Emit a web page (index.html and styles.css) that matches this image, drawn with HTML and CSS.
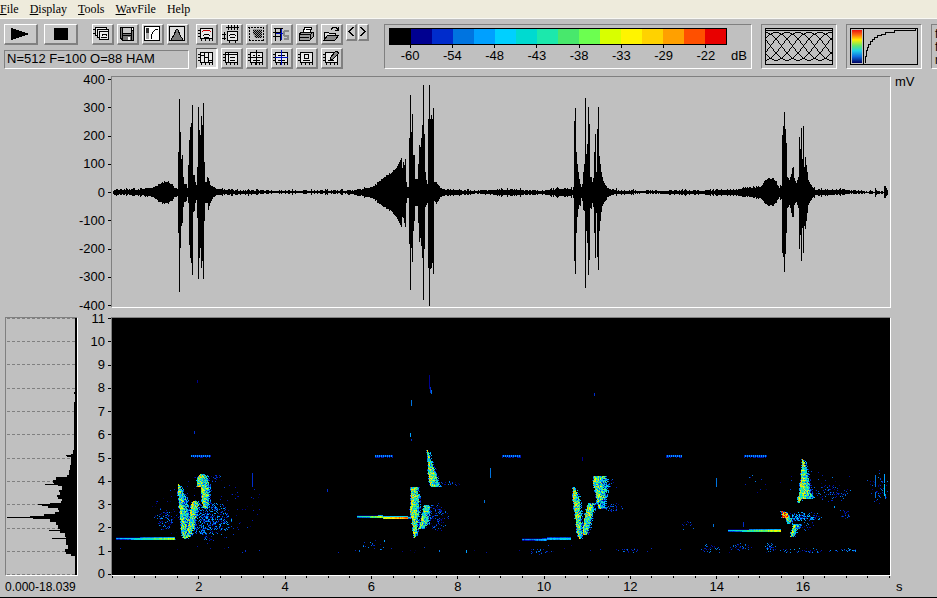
FILE: index.html
```html
<!DOCTYPE html>
<html lang="en">
<head>
<meta charset="utf-8">
<title>Sound analysis</title>
<link rel="stylesheet" href="styles.css">
</head>
<body>
<svg class="defs" aria-hidden="true">
  <symbol id="frame" viewBox="0 0 18 18">
    <rect x="3.500" y="3.500" width="12" height="10" fill="#e8e8e8" stroke="#000"/>
    <path d="M1 5.500h2M1 8.500h2M1 11.500h2M4.500 14v2M8.500 14v2M12.500 14v2M15.500 14v2" stroke="#000" fill="none"/>
  </symbol>
</svg>

<nav class="menubar">
  <button><u>F</u>ile</button>
  <button><u>D</u>isplay</button>
  <button><u>T</u>ools</button>
  <button><u>W</u>avFile</button>
  <button>Help</button>
</nav>

<header class="toolbar">
  <div class="transport">
    <div class="row">
      <button class="btn wide" aria-label="Play"><svg viewBox="0 0 30 17"><path d="M6 3L24 9L6 15z"/></svg></button>
      <button class="btn wide" aria-label="Stop"><svg viewBox="0 0 30 17"><path d="M9 3h14v12H9z"/></svg></button>
      <div class="icons">
        <button class="btn" aria-label="Copy"><svg viewBox="0 0 18 18"><g fill="#e8e8e8" stroke="#000"><path d="M2.500 2.500h11v8h-11z"/><path d="M4.500 4.500h11v8h-11z"/><path d="M6.500 6.500h9v8h-9z"/></g><path d="M0 4.500h2M0 8.500h2M8 12.500h6M9 10.500l1-1h3l1 1" stroke="#000" fill="none"/></svg></button>
        <button class="btn" aria-label="Save"><svg viewBox="0 0 18 18"><path d="M2 2h14v14H4l-2-2z"/><path d="M5 3h8v5H5z" fill="#c8c8c8"/><path d="M3 3h1v10H3zM14 6h1v9h-1zM5 9h8v1H5z" fill="#777"/><path d="M5 11h8v4H5z" fill="#777"/><path d="M10 12h2v3h-2z" fill="#fff"/><path d="M14 3h1v2h-1z" fill="#fff"/></svg></button>
        <button class="btn" aria-label="Palette curve"><svg viewBox="0 0 18 18"><path d="M1.500 1.500h15v14h-15z" fill="#fff" stroke="#000"/><path d="M3 3h3v5H3z" fill="#333"/><path d="M3 8h3v6H3z" fill="#aaa"/><path d="M8.500 14V9.500L10.500 6.500L12.500 4.500H15" fill="none" stroke="#000"/></svg></button>
        <button class="btn" aria-label="Spectrum"><svg viewBox="0 0 18 18"><path d="M1.500 1.500h15v14h-15z" fill="#ddd" stroke="#000"/><path d="M3 15L6 10L8 5L9 4L10 5L12 10L15 15z" fill="#777" stroke="#000"/></svg></button>
      </div>
    </div>
    <output class="status">N=512 F=100 O=88 HAM</output>
  </div>

  <div class="views">
    <button class="btn" aria-label="Spectrogram"><svg viewBox="0 0 18 18"><use href="#frame"/><path d="M6 5.500h7M5 6.500h1M13 6.500h1" stroke="#c00"/><path d="M7 9.500h5M6 10.500h1M12 10.500h1M7 12.500h5" stroke="#000" fill="none"/></svg></button>
    <button class="btn" aria-label="Time axis"><svg viewBox="0 0 18 18"><path d="M5.500 6.500h10v9h-10z" fill="#e8e8e8" stroke="#000"/><path d="M4 2.500h13M6.500 0v5M9.500 0v5M12.500 0v5M15.500 0v5M0 9.500h4M2.500 7v8M0 13.500h4M8 9.500h5M7 10.500h1M13 10.500h1M8 12.500h5M7.500 16v2M13.500 16v2" stroke="#000" fill="none"/></svg></button>
    <button class="btn" aria-label="Select area"><svg viewBox="0 0 18 18"><path d="M1 2.500h15M2.500 2v14M2 15.500h15M16.500 2v14" stroke="#000" stroke-dasharray="2 1" fill="none"/><path d="M6 4h9v9H8L6 9z" fill="#999"/><path d="M6 5.500h9M6 7.500h9M8 9.500h7M8 11.500h7" stroke="#000" stroke-dasharray="1 1"/><path d="M7 6.500h8M7 8.500h8M9 10.500h6M9 12.500h6" stroke="#000" stroke-dasharray="1 1"/></svg></button>
    <button class="btn" aria-label="Settings"><svg viewBox="0 0 18 18"><path d="M2 3.500h9M3.500 3v13M1 7.500h7M1 11.500h7M8.500 3v13" stroke="#000" fill="none"/><path d="M4 8.500h7M9.500 4v11" stroke="#0010c0" fill="none"/><path d="M17 6h-4l-1 1v3l1 1h3v3h-4" stroke="#888" stroke-width="2" fill="none"/></svg></button>
    <button class="btn" aria-label="Print"><svg viewBox="0 0 18 18"><path d="M6 7l2-5h7l-2 5z" fill="#fff" stroke="#000"/><path d="M2 9l3-2h11v5l-3 3H2z" fill="#999" stroke="#000"/><path d="M2 9.500h11v5M13 9.500l3-2M3 12.500h9M5 15.500h8M9 4.500h4" stroke="#000" fill="none"/></svg></button>
    <button class="btn" aria-label="Open"><svg viewBox="0 0 18 18"><path d="M2 15V7h4l1 1h6v3" fill="#ddd" stroke="#000"/><path d="M2 15l4-5h11l-4 5z" fill="#888" stroke="#000"/><path d="M9 4.500l2-2h3l2 2M16.500 2v4M13 5.500h3" stroke="#000" fill="none"/></svg></button>

    <button class="btn pressed" aria-label="Columns"><svg viewBox="0 0 18 18"><use href="#frame"/><path d="M7.500 3v11M11.500 3v11M4 6.500h3M8 8.500h3M12 11.500h3" stroke="#000"/></svg></button>
    <button class="btn" aria-label="Rows"><svg viewBox="0 0 18 18"><use href="#frame"/><path d="M4 5.500h12M6.500 3v11M8 8.500h5M8 11.500h5" stroke="#000"/></svg></button>
    <button class="btn" aria-label="Cross cursor"><svg viewBox="0 0 18 18"><use href="#frame"/><path d="M9.500 1v15M3 8.500h13M6 6.500h2M11 6.500h2M6 11.500h7" stroke="#000"/></svg></button>
    <button class="btn" aria-label="Blue cursor"><svg viewBox="0 0 18 18"><use href="#frame"/><path d="M6 6.500h7M6 11.500h7" stroke="#000"/><path d="M9.500 1v15M3 8.500h13" stroke="#0010c0"/></svg></button>
    <button class="btn" aria-label="Zoom box"><svg viewBox="0 0 18 18"><use href="#frame"/><path d="M7.500 5.500h4v4h-4zM6 11.500h7" stroke="#000" fill="none"/></svg></button>
    <button class="btn" aria-label="Annotate"><svg viewBox="0 0 18 18"><use href="#frame"/><path d="M8 9l6-7 3 2-6 6-3 1z" fill="#888" stroke="#000"/><path d="M6 11.500h6" stroke="#000"/></svg></button>
  </div>

  <div class="arrows">
    <button class="btn arrow" aria-label="Previous"><svg viewBox="0 0 8 14"><path d="M6 2L2 6.500L6 11" fill="none" stroke="#000" stroke-width="1.500"/></svg></button>
    <button class="btn arrow" aria-label="Next"><svg viewBox="0 0 8 14"><path d="M2 2L6 6.500L2 11" fill="none" stroke="#000" stroke-width="1.500"/></svg></button>
  </div>

  <div class="panel scale">
    <div class="scale-main">
      <div class="colors" id="colors"></div>
      <div class="levels"><span>-60</span><span>-54</span><span>-48</span><span>-43</span><span>-38</span><span>-33</span><span>-29</span><span>-22</span></div>
    </div>
    <span class="unit">dB</span>
  </div>
  <div class="panel thumb">
    <svg viewBox="0 0 68 37"><path d="M.5.5h67v36H.5zM0 2.500h68" fill="none" stroke="#000"/><path id="windows" fill="none" stroke="#000"/></svg>
  </div>
  <div class="panel thumb">
    <svg viewBox="0 0 68 37">
      <defs><linearGradient id="rainbow" x1="0" y1="0" x2="0" y2="1"><stop offset="0" stop-color="#e81010"/><stop offset=".15" stop-color="#ff7010"/><stop offset=".3" stop-color="#fff000"/><stop offset=".48" stop-color="#60e870"/><stop offset=".63" stop-color="#20d0e8"/><stop offset=".8" stop-color="#1070e0"/><stop offset="1" stop-color="#000060"/></linearGradient></defs>
      <path d="M.5.5h67v36H.5zM13.500 0v37" fill="none" stroke="#000"/>
      <rect x="2" y="2" width="10" height="33" fill="url(#rainbow)"/>
      <path d="M15.500 35v-7h1v-6h1v-3h1v-3h2v-3h2v-2h2v-2h3v-2h4v-1h4v-2h9v-2h21v-1" fill="none" stroke="#000"/>
    </svg>
  </div>
  <div class="panel more"><span>f</span><span>f</span><span>r</span></div>
</header>

<main class="plots">
  <div class="axis-y wave-axis"><span>400</span><span>300</span><span>200</span><span>100</span><span>0</span><span>-100</span><span>-200</span><span>-300</span><span>-400</span></div>
  <section class="frame wave" aria-label="Waveform">
    <svg viewBox="0 0 778 230" preserveAspectRatio="none"><path id="wave"/></svg>
  </section>
  <span class="mv">mV</span>

  <section class="frame spectrum" aria-label="Spectrum">
    <svg viewBox="0 0 71 256" preserveAspectRatio="none">
      <path id="grid" fill="none" stroke="#808080" stroke-dasharray="3 2"/>
      <path id="spectrum"/>
    </svg>
  </section>
  <span class="range">0.000-18.039</span>

  <div class="axis-y freq-axis"><span>11</span><span>10</span><span>9</span><span>8</span><span>7</span><span>6</span><span>5</span><span>4</span><span>3</span><span>2</span><span>1</span><span>0</span></div>
  <section class="frame sonogram" aria-label="Spectrogram">
    <canvas id="sonogram" width="778" height="256"></canvas>
  </section>
  <div class="axis-x" id="time"></div>
  <span class="sec">s</span>
</main>
<script src="script.js"></script>
</body>
</html>
```

FILE: styles.css
```css
* { box-sizing: border-box; }

body {
  margin: 0;
  height: 100vh;
  display: flex;
  flex-direction: column;
  overflow: hidden;
  background: #c0c0c0;
  color: #000;
  border-bottom: 1px solid #000;
  font: 13px/16px "Liberation Sans", Arial, sans-serif;
}

.defs { display: none; }
svg, canvas { display: block; }
svg { shape-rendering: crispEdges; }

button {
  margin: 0;
  padding: 0;
  border: 0;
  background: none;
  color: inherit;
  font: inherit;
}

.menubar {
  flex: none;
  display: flex;
  gap: 11px;
  height: 19px;
  background: #eeebdc;
  border-bottom: 1px solid #f8f8f4;
  font: 12px/18px "Liberation Serif", "Times New Roman", serif;
}

.toolbar {
  flex: none;
  display: flex;
  align-items: flex-start;
  padding: 5px 0 7px 4px;
  overflow: hidden;
}
.toolbar > * { flex: none; }

.transport { width: 185px; margin-right: 7px; }
.row { display: flex; gap: 6px; }
.icons { display: flex; gap: 3px; margin-left: 8px; }

.btn {
  display: grid;
  place-content: start;
  width: 22px;
  height: 21px;
  overflow: hidden;
  border: 1px solid;
  border-color: #fff #808080 #808080 #fff;
  border-right-width: 2px;
  border-bottom-width: 2px;
  background: #c8c8c8;
}
.btn svg { width: 18px; height: 18px; }
.btn.wide { width: 34px; }
.btn.wide svg { width: 30px; height: 17px; }
.btn.pressed {
  background: #d8d8d8;
  border-color: #606060 #fff #fff #606060;
}
.btn.arrow { width: 11px; height: 17px; }
.btn.arrow svg { width: 8px; height: 14px; }

.status {
  display: block;
  height: 19px;
  margin-top: 5px;
  padding-left: 2px;
  border: 1px solid;
  border-color: #808080 #fff #fff #808080;
}

.views {
  display: grid;
  grid-template-columns: repeat(6, 22px);
  gap: 3px;
  margin-right: 3px;
}
.arrows { display: flex; gap: 1px; margin-right: 15px; }

.panel {
  height: 45px;
  padding: 3px;
  border: 1px solid;
  border-color: #808080 #fff #fff #808080;
  margin-right: 9px;
}
.scale { display: flex; gap: 4px; width: 368px; padding-left: 4px; }
.scale-main { width: 338px; }
.colors { display: flex; height: 17px; border: 1px solid #000; }
.colors i { flex: 1; }
.levels { display: flex; }
.levels span {
  flex: 1;
  display: flex;
  flex-direction: column;
  align-items: center;
}
.levels span::before { content: ""; width: 1px; height: 3px; background: #000; }
.unit { margin-top: 20px; }
.thumb { width: 76px; }
.thumb svg { width: 68px; height: 37px; }
.more { width: 76px; display: flex; flex-direction: column; font-size: 12px; line-height: 13px; }

.plots {
  flex: 1;
  min-height: 0;
  display: grid;
  grid-template-columns: 5px 73px 33px minmax(0, 1fr) 46px;
  grid-template-rows: minmax(0, 232fr) 9px minmax(0, 259fr) 21px;
}

.frame {
  border: 1px solid;
  border-color: #808080 #fff #fff #808080;
  overflow: hidden;
}
.frame svg, .frame canvas { width: 100%; height: 100%; }
.wave { grid-area: 1 / 4; }
.spectrum { grid-area: 3 / 2; }
.sonogram { grid-area: 3 / 4; background: #000; }
.sonogram canvas { image-rendering: pixelated; }

.axis-y {
  display: flex;
  flex-direction: column;
  justify-content: space-between;
}
.axis-y span {
  display: flex;
  justify-content: flex-end;
  align-items: center;
  gap: 3px;
  height: 1px;
}
.axis-y span::after { content: ""; width: 3px; height: 1px; background: #000; }
.wave-axis { grid-area: 1 / 3; padding: 3px 0 2px; }
.freq-axis { grid-area: 3 / 3; padding: 1px 0; }

.axis-x {
  grid-area: 4 / 4;
  display: flex;
  justify-content: space-between;
  padding: 0 1px;
}
.axis-x span {
  display: flex;
  flex-direction: column;
  align-items: center;
  width: 1px;
}
.axis-x span::before { content: ""; width: 1px; flex: none; height: 2px; background: #000; }
.axis-x .major::before { height: 3px; }

.mv { grid-area: 1 / 5; padding: 0 0 0 4px; line-height: 12px; }
.sec { grid-area: 4 / 5; padding: 3px 0 0 5px; }
.range { grid-area: 4 / 2 / auto / 4; padding-top: 3px; font-size: 12px; }
```

FILE: script.js
```js
const palette = [
  [0, 0, 0], [0, 0, 144], [0, 44, 204], [0, 116, 224], [0, 160, 255], [0, 208, 255],
  [0, 218, 208], [28, 232, 172], [72, 232, 108], [108, 255, 80], [216, 255, 0],
  [255, 244, 0], [255, 210, 0], [255, 160, 0], [255, 80, 0], [232, 0, 0]
];

let seed = 20;
function random() {
  seed = (seed * 1664525 + 1013904223) % 4294967296;
  return seed / 4294967296;
}

/* Colour scale */
const colors = document.getElementById('colors');
palette.forEach(c => {
  const cell = document.createElement('i');
  cell.style.background = `rgb(${c})`;
  colors.append(cell);
});

/* Overlapping analysis windows */
let windows = '';
for (let s = -66; s < 68; s += 11) {
  let pen = 'M';
  for (let x = 0; x <= 66; x += 1) {
    const px = s + x;
    if (px < 1 || px > 67) continue;
    windows += `${pen}${px} ${Math.round(32 - 14 * (1 - Math.cos(2 * Math.PI * x / 66)))}`;
    pen = 'L';
  }
}
document.getElementById('windows').setAttribute('d', windows);

/* Time axis, a tick each half second */
const time = document.getElementById('time');
for (let i = 0; i <= 36; i++) {
  const tick = document.createElement('span');
  if (i && i % 4 === 0 && i < 36) {
    tick.className = 'major';
    tick.textContent = i / 2;
  }
  time.append(tick);
}

/* Waveform envelope: column, height above zero, depth below zero */
const envelope = [
  [113,1,1],[125,2,1],[140,2,2],[150,4,3],[155,5,5],[160,8,9],[165,10,10],[170,8,8],[174,4,4],[177,3,3],
  [178,40,40],[179,93,99],[180,60,55],[181,33,33],[182,37,30],[183,15,14],[184,8,9],[186,8,8],[187,4,4],
  [188,27,10],[189,52,52],[190,65,65],[191,69,70],[192,87,82],[193,17,19],[194,17,18],[195,10,10],[196,7,7],
  [197,25,25],[198,85,86],[199,62,65],[200,57,55],[201,76,75],[202,67,68],[203,89,86],[204,30,28],[205,10,10],
  [206,10,10],[207,15,10],[208,14,17],[209,11,13],[210,7,10],[212,5,5],[216,3,2],[225,2,1],[240,1,1],[260,1,0],
  [340,1,0],[355,1,1],[365,3,3],[375,6,6],[380,11,11],[385,15,14],[390,18,17],[395,22,22],[400,32,32],[401,34,34],
  [402,24,24],[403,30,25],[404,27,30],[405,33,34],[406,10,10],[407,5,5],[408,5,5],[409,54,51],[410,97,97],
  [411,60,55],[412,78,69],[413,37,38],[414,37,28],[415,12,12],[417,13,13],[418,28,30],[419,47,49],[420,45,45],
  [421,54,53],[422,67,65],[423,107,107],[424,58,56],[425,20,14],[426,12,12],[427,8,10],[428,73,75],[429,107,113],
  [430,73,76],[431,77,75],[432,73,70],[433,84,81],[434,10,8],[436,9,10],[438,7,8],[440,4,4],[445,2,2],[460,1,1],
  [480,1,0],[500,2,2],[515,2,2],[530,1,1],[545,1,1],[560,3,3],[570,3,3],[572,2,2],[573,5,5],[574,71,68],[575,84,81],
  [576,40,40],[577,28,24],[578,20,16],[579,13,12],[580,8,13],[581,5,5],[582,8,8],[583,20,17],[584,28,18],[585,94,95],
  [586,38,38],[587,48,50],[588,85,82],[589,68,67],[590,15,15],[591,15,16],[592,10,10],[593,14,14],[594,40,40],
  [595,58,65],[596,20,20],[597,63,64],[598,85,77],[599,36,38],[600,28,28],[601,20,19],[602,15,13],[603,10,10],
  [605,6,7],[608,3,3],[612,2,1],[620,1,1],[640,1,0],[700,1,1],[735,2,2],[745,4,3],[755,4,4],[761,5,5],[764,10,9],
  [768,13,12],[772,13,12],[776,9,8],[779,4,4],[781,6,6],[782,57,60],[783,66,64],[784,80,79],[785,63,61],[786,49,40],
  [787,15,15],[789,12,12],[790,15,15],[791,18,20],[792,24,24],[793,25,24],[794,14,12],[796,8,8],[798,15,15],
  [799,55,56],[800,43,42],[801,64,68],[802,33,35],[803,66,60],[804,25,33],[805,35,36],[806,27,28],[807,20,20],
  [808,12,12],[810,8,8],[812,5,5],[815,2,2],[825,2,2],[840,2,1],[850,1,0],[874,0,0],[875,4,4],[876,1,1],[883,0,0],
  [884,6,5],[886,3,2],[888,1,1]
];
let wave = '';
for (let i = 0; i < envelope.length - 1; i++) {
  const [x0, u0, d0] = envelope[i];
  const [x1, u1, d1] = envelope[i + 1];
  for (let x = x0; x < x1; x++) {
    const t = (x - x0) / (x1 - x0);
    const jitter = x1 - x0 > 1 ? random() * random() * 2.4 : 0;
    const up = Math.round(u0 + (u1 - u0) * t + jitter);
    const down = Math.round(d0 + (d1 - d0) * t + jitter);
    wave += `M${x - 112} ${115 - up}h1v${up + down + 1}h-1z`;
  }
}
document.getElementById('wave').setAttribute('d', wave);

/* Mean spectrum: row, leftmost filled column */
const profile = [
  [319,75],[393,74],[395,75],[403,74],[430,74],[450,73],[454,71],[455,66],[456,67],[457,71],[465,70],[470,69],
  [475,67],[477,56],[480,53],[483,54],[484,45],[485,58],[486,62],[490,59],[492,60],[495,57],[497,58],[499,62],
  [501,61],[503,50],[504,38],[505,42],[506,48],[508,58],[510,59],[512,55],[514,44],[516,30],[517,7],[518,33],
  [519,50],[522,56],[525,58],[529,60],[530,49],[531,60],[533,65],[537,66],[538,52],[539,66],[545,68],[549,65],
  [552,66],[554,71],[556,75],[575,75]
];
let spectrum = 'M71 0';
profile.forEach(([y, x]) => { spectrum += `${spectrum.length > 5 ? 'V' : 'V'}${y - 319}H${x - 6}`; });
document.getElementById('spectrum').setAttribute('d', spectrum + 'V256H71z');
let grid = '';
for (let k = 0; k < 12; k++) grid += `M1 ${Math.round(k * 23.18) + 0.5}H69`;
document.getElementById('grid').setAttribute('d', grid);

/* Spectrogram */
const canvas = document.getElementById('sonogram');
const ctx = canvas.getContext('2d');
function dot(x, y, level, h = 1) {
  const v = Math.max(0, Math.min(15, level));
  const a = palette[Math.floor(v)];
  const b = palette[Math.ceil(v)];
  const f = v % 1;
  ctx.fillStyle = `rgb(${a.map((c, i) => Math.round(c + (b[i] - c) * f))})`;
  ctx.fillRect(x - 112, y - 319, 1, h);
}
/* Scattered faint energy over a box */
function haze(x, y, w, h, density, level) {
  for (let j = 0; j < h; j++) for (let i = 0; i < w; i++) {
    const dx = (i - w / 2) / (w / 2);
    const dy = (j - h / 2) / (h / 2);
    const near = Math.max(0, 1 - dx * dx * 0.8 - dy * dy * 0.8);
    if (random() < density * near) dot(x + i, y + j, random() * level + 0.3);
  }
}
/* Call outline given as rows of [y, left, right]; heat is strongest at the left edge */
function call(rows, heat) {
  for (let k = 0; k < rows.length - 1; k++) {
    const [y0, l0, r0] = rows[k];
    const [y1, l1, r1] = rows[k + 1];
    for (let y = y0; y < y1; y++) {
      const t = (y - y0) / (y1 - y0);
      const l = Math.round(l0 + (l1 - l0) * t);
      const r = Math.round(r0 + (r1 - r0) * t);
      for (let x = l - 1; x <= r + 2; x++) {
        const edge = (x - l) / (r - l + 1);
        if (x < l || x > r) {
          if (random() < 0.5) dot(x, y, 1 + random() * 4);
        } else {
          dot(x, y, heat - edge * 4 + (random() - 0.5) * 9);
        }
      }
    }
  }
}
function whistle(x0, x1, y, from, to, drop = 0) {
  for (let x = x0; x <= x1; x++) {
    const t = (x - x0) / (x1 - x0);
    const yy = y + Math.round(drop * t);
    const v = from + (to - from) * t + random() * 2 - 1;
    dot(x, yy - 1, t > 0.4 ? v * 0.4 : 0.6);
    dot(x, yy, v);
    dot(x, yy + 1, t > 0.25 ? v - 1 : v * 0.4);
  }
}

haze(112, 545, 778, 10, 0.012, 2);
haze(150, 470, 110, 78, 0.04, 2);
haze(154, 507, 20, 24, 0.4, 4);
haze(184, 503, 48, 32, 0.55, 4.5);
haze(206, 502, 20, 8, 0.3, 4);
haze(200, 526, 14, 14, 0.3, 4);
haze(205, 474, 20, 8, 0.2, 3);
haze(425, 503, 24, 28, 0.3, 3);
haze(438, 481, 24, 5, 0.35, 3);
haze(600, 502, 24, 10, 0.25, 3);
haze(604, 476, 16, 12, 0.12, 3);
haze(805, 484, 45, 18, 0.16, 3);
haze(784, 512, 38, 9, 0.7, 5);
haze(796, 521, 20, 10, 0.2, 3);
haze(826, 492, 20, 3, 0.6, 4);
haze(838, 509, 14, 10, 0.3, 3);
haze(824, 488, 10, 4, 0.3, 3);
haze(700, 543, 22, 10, 0.3, 3.5);
haze(728, 543, 24, 8, 0.3, 4);
haze(764, 541, 12, 12, 0.4, 4);
haze(778, 548, 55, 5, 0.25, 4);
haze(833, 548, 24, 4, 0.5, 4);
haze(528, 548, 24, 6, 0.3, 3);
haze(618, 547, 22, 6, 0.3, 3);
haze(680, 520, 14, 10, 0.15, 3);
haze(355, 540, 30, 14, 0.12, 4);
haze(700, 470, 180, 30, 0.015, 3);
haze(870, 470, 18, 34, 0.15, 3);

whistle(116, 174, 538, 4, 10);
whistle(357, 408, 516, 6, 15, 1);
whistle(408, 414, 517, 6, 4);
whistle(522, 570, 539, 3, 6, -1);
whistle(728, 780, 530, 5, 11);

[[191,210],[375,392],[502,520],[666,681],[744,766]].forEach(([a, b]) => {
  for (let x = a; x <= b; x++) {
    dot(x, 455, x % 2 ? 4 : 1.6, 2);
    if (random() < 0.5) dot(x, 457, 1.4);
  }
});

call([[484,178,178],[492,178,182],[500,179,186],[515,180,187],[525,181,189],[535,182,189],[539,184,185]], 8);
call([[501,193,196],[504,191,198],[515,190,195],[527,188,193],[537,187,189]], 9);
call([[474,200,204],[478,197,207],[486,197,208],[487,201,208],[499,202,208],[508,203,207]], 9);
call([[450,427,427],[460,428,430],[470,428,434],[480,429,437],[487,431,439]], 9);
call([[487,411,417],[500,411,418],[510,410,418],[520,412,417],[530,413,416],[538,414,414]], 9);
call([[505,424,429],[515,422,429],[524,420,427],[529,418,422]], 8);
call([[487,573,573],[497,573,578],[515,575,580],[530,577,581],[539,579,580]], 9);
call([[503,588,592],[510,586,593],[520,584,590],[530,583,588],[535,583,585]], 9);
call([[476,594,605],[482,593,607],[490,595,606],[500,597,604],[509,599,604]], 8);
call([[503,592,599],[505,593,599]], 7);
call([[459,802,802],[463,802,804],[475,801,807],[487,800,809],[495,799,811],[498,798,812],[499,798,800],[503,798,798]], 9);
call([[511,781,782],[513,782,787],[518,782,788]], 14);
call([[518,786,791],[524,788,790]], 8);
call([[524,793,799],[530,792,796],[537,790,792]], 8);

/* Narrow vertical transients */
[[252,473,14,2],[429,376,14,1],[430,388,6,2],[431,391,4,3],[411,401,6,3],[410,434,4,4],[490,468,10,3],
 [484,500,3,3],[411,440,2,2],[716,478,9,3],[875,475,12,3],[875,492,6,3],[884,474,9,4],[884,484,12,5],[885,494,4,3],
 [197,381,3,1],[327,489,3,2],[194,432,3,2],[834,506,2,4],[713,524,3,3],[743,522,5,2],[384,540,2,4],[466,550,3,4],
 [439,550,2,3],[359,550,2,3],[594,394,3,2],[582,457,4,1],[245,550,2,2]]
  .forEach(([x, y, h, v]) => dot(x, y, v, h));
```
